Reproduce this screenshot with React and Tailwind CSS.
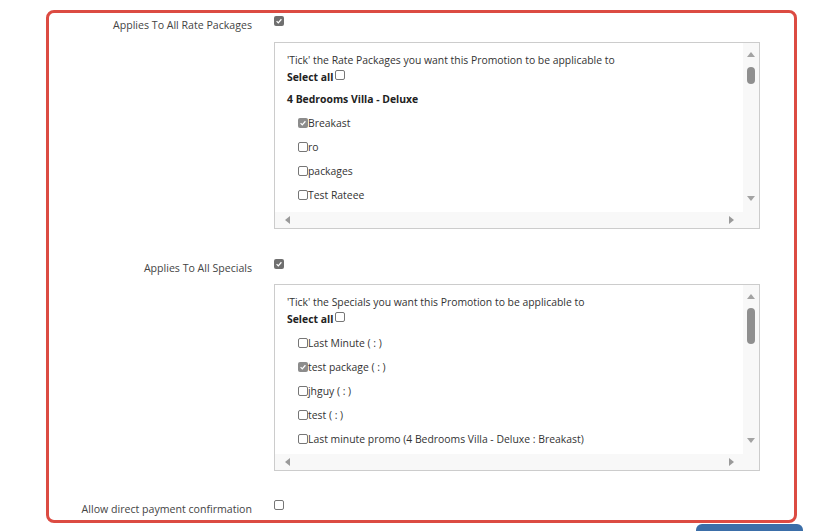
import React from "react";

const font = { fontFamily: "'Open Sans', 'Liberation Sans', sans-serif" };

function Check({ checked, dark }) {
  return (
    <span
      className={`inline-flex w-[10px] h-[10px] items-center justify-center rounded-[2px] shrink-0 ${
        checked
          ? dark
            ? "bg-[#6f6f6f]"
            : "bg-[#8c8c8c]"
          : "border border-[#767676] bg-white"
      }`}
    >
      {checked && (
        <svg viewBox="0 0 10 10" className="w-[8px] h-[8px]">
          <path d="M2 5.2 L4.1 7.3 L8 2.8" fill="none" stroke="white" strokeWidth="1.6" />
        </svg>
      )}
    </span>
  );
}

function ScrollBox({ title, thumbTop, thumbH, children }) {
  return (
    <div className="relative w-[486px] h-[187px] border border-[#cccccc] bg-white overflow-hidden">
      <div className="absolute left-0 top-0 right-[16px] bottom-[16px] overflow-hidden pl-[12px] pt-[10px] text-[10.4px] text-[#333]">
        <div className="leading-[14px] whitespace-nowrap">{title}</div>
        {children}
      </div>
      <div className="absolute right-0 top-0 bottom-[16px] w-[16px] bg-[#f8f8f8]">
        <svg className="absolute left-[4px] top-[8px]" width="8" height="6" viewBox="0 0 8 6">
          <path d="M0 6 L4 1 L8 6 Z" fill="#a3a3a3" />
        </svg>
        <div
          className="absolute left-[4px] w-[8px] rounded-full bg-[#8f8f8f]"
          style={{ top: thumbTop, height: thumbH }}
        />
        <svg className="absolute left-[4px] bottom-[10px]" width="8" height="6" viewBox="0 0 8 6">
          <path d="M0 0 L4 5 L8 0 Z" fill="#a3a3a3" />
        </svg>
      </div>
      <div className="absolute left-0 bottom-0 right-0 h-[16px] bg-[#f8f8f8]">
        <svg className="absolute left-[9px] top-[4px]" width="6" height="8" viewBox="0 0 6 8">
          <path d="M6 0 L1 4 L6 8 Z" fill="#9a9a9a" />
        </svg>
        <svg className="absolute right-[24px] top-[4px]" width="6" height="8" viewBox="0 0 6 8">
          <path d="M0 0 L5 4 L0 8 Z" fill="#9a9a9a" />
        </svg>
      </div>
    </div>
  );
}

function Item({ checked, children }) {
  return (
    <div className="flex items-center h-[24px] pl-[11px] whitespace-nowrap">
      <Check checked={checked} />
      <span className="leading-[14px]">{children}</span>
    </div>
  );
}

function SelectAll() {
  return (
    <div className="flex items-center gap-[2px] font-bold leading-[14px] mt-[3px] text-[#222]">
      <span>Select all</span>
      <span className="relative top-[-2px] flex">
        <Check />
      </span>
    </div>
  );
}

function Row({ label, checked, labelPt, className }) {
  return (
    <div className={`flex items-start ${className}`}>
      <div
        className="w-[252px] text-right text-[10.6px] text-[#444] leading-[14px] whitespace-nowrap"
        style={{ paddingTop: labelPt }}
      >
        {label}
      </div>
      <div className="ml-[22px] flex">
        <Check checked={checked} dark />
      </div>
    </div>
  );
}

export default function App() {
  return (
    <div className="w-[822px] h-[531px] bg-white relative overflow-hidden" style={font}>
      <div className="absolute left-[46px] top-[10px] w-[751px] h-[513px] border-[3px] border-[#dc4b42] rounded-[8px] pointer-events-none" />
      <div className="pt-[16px]">
        <Row label="Applies To All Rate Packages" checked labelPt={2} />
        <div className="ml-[274px] mt-[10px]">
          <ScrollBox title="'Tick' the Rate Packages you want this Promotion to be applicable to" thumbTop={24} thumbH={17}>
            <SelectAll />
            <div className="font-bold leading-[14px] mt-[8px] mb-[5px] text-[#222]">4 Bedrooms Villa - Deluxe</div>
            <Item checked>Breakast</Item>
            <Item>ro</Item>
            <Item>packages</Item>
            <Item>Test Rateee</Item>
          </ScrollBox>
        </div>

        <Row label="Applies To All Specials" checked labelPt={2} className="mt-[30px]" />
        <div className="ml-[274px] mt-[9px]">
          <ScrollBox title="'Tick' the Specials you want this Promotion to be applicable to" thumbTop={23} thumbH={36}>
            <SelectAll />
            <div className="h-[5px]" />
            <Item>Last Minute ( : )</Item>
            <Item checked>test package ( : )</Item>
            <Item>jhguy ( : )</Item>
            <Item>test ( : )</Item>
            <Item>Last minute promo (4 Bedrooms Villa - Deluxe : Breakast)</Item>
          </ScrollBox>
        </div>

        <Row label="Allow direct payment confirmation" labelPt={2} className="mt-[29px]" />
      </div>
      <div className="absolute left-[696px] top-[524px] w-[107px] h-[20px] rounded-[6px] bg-[#3b6ea8]" />
    </div>
  );
}
